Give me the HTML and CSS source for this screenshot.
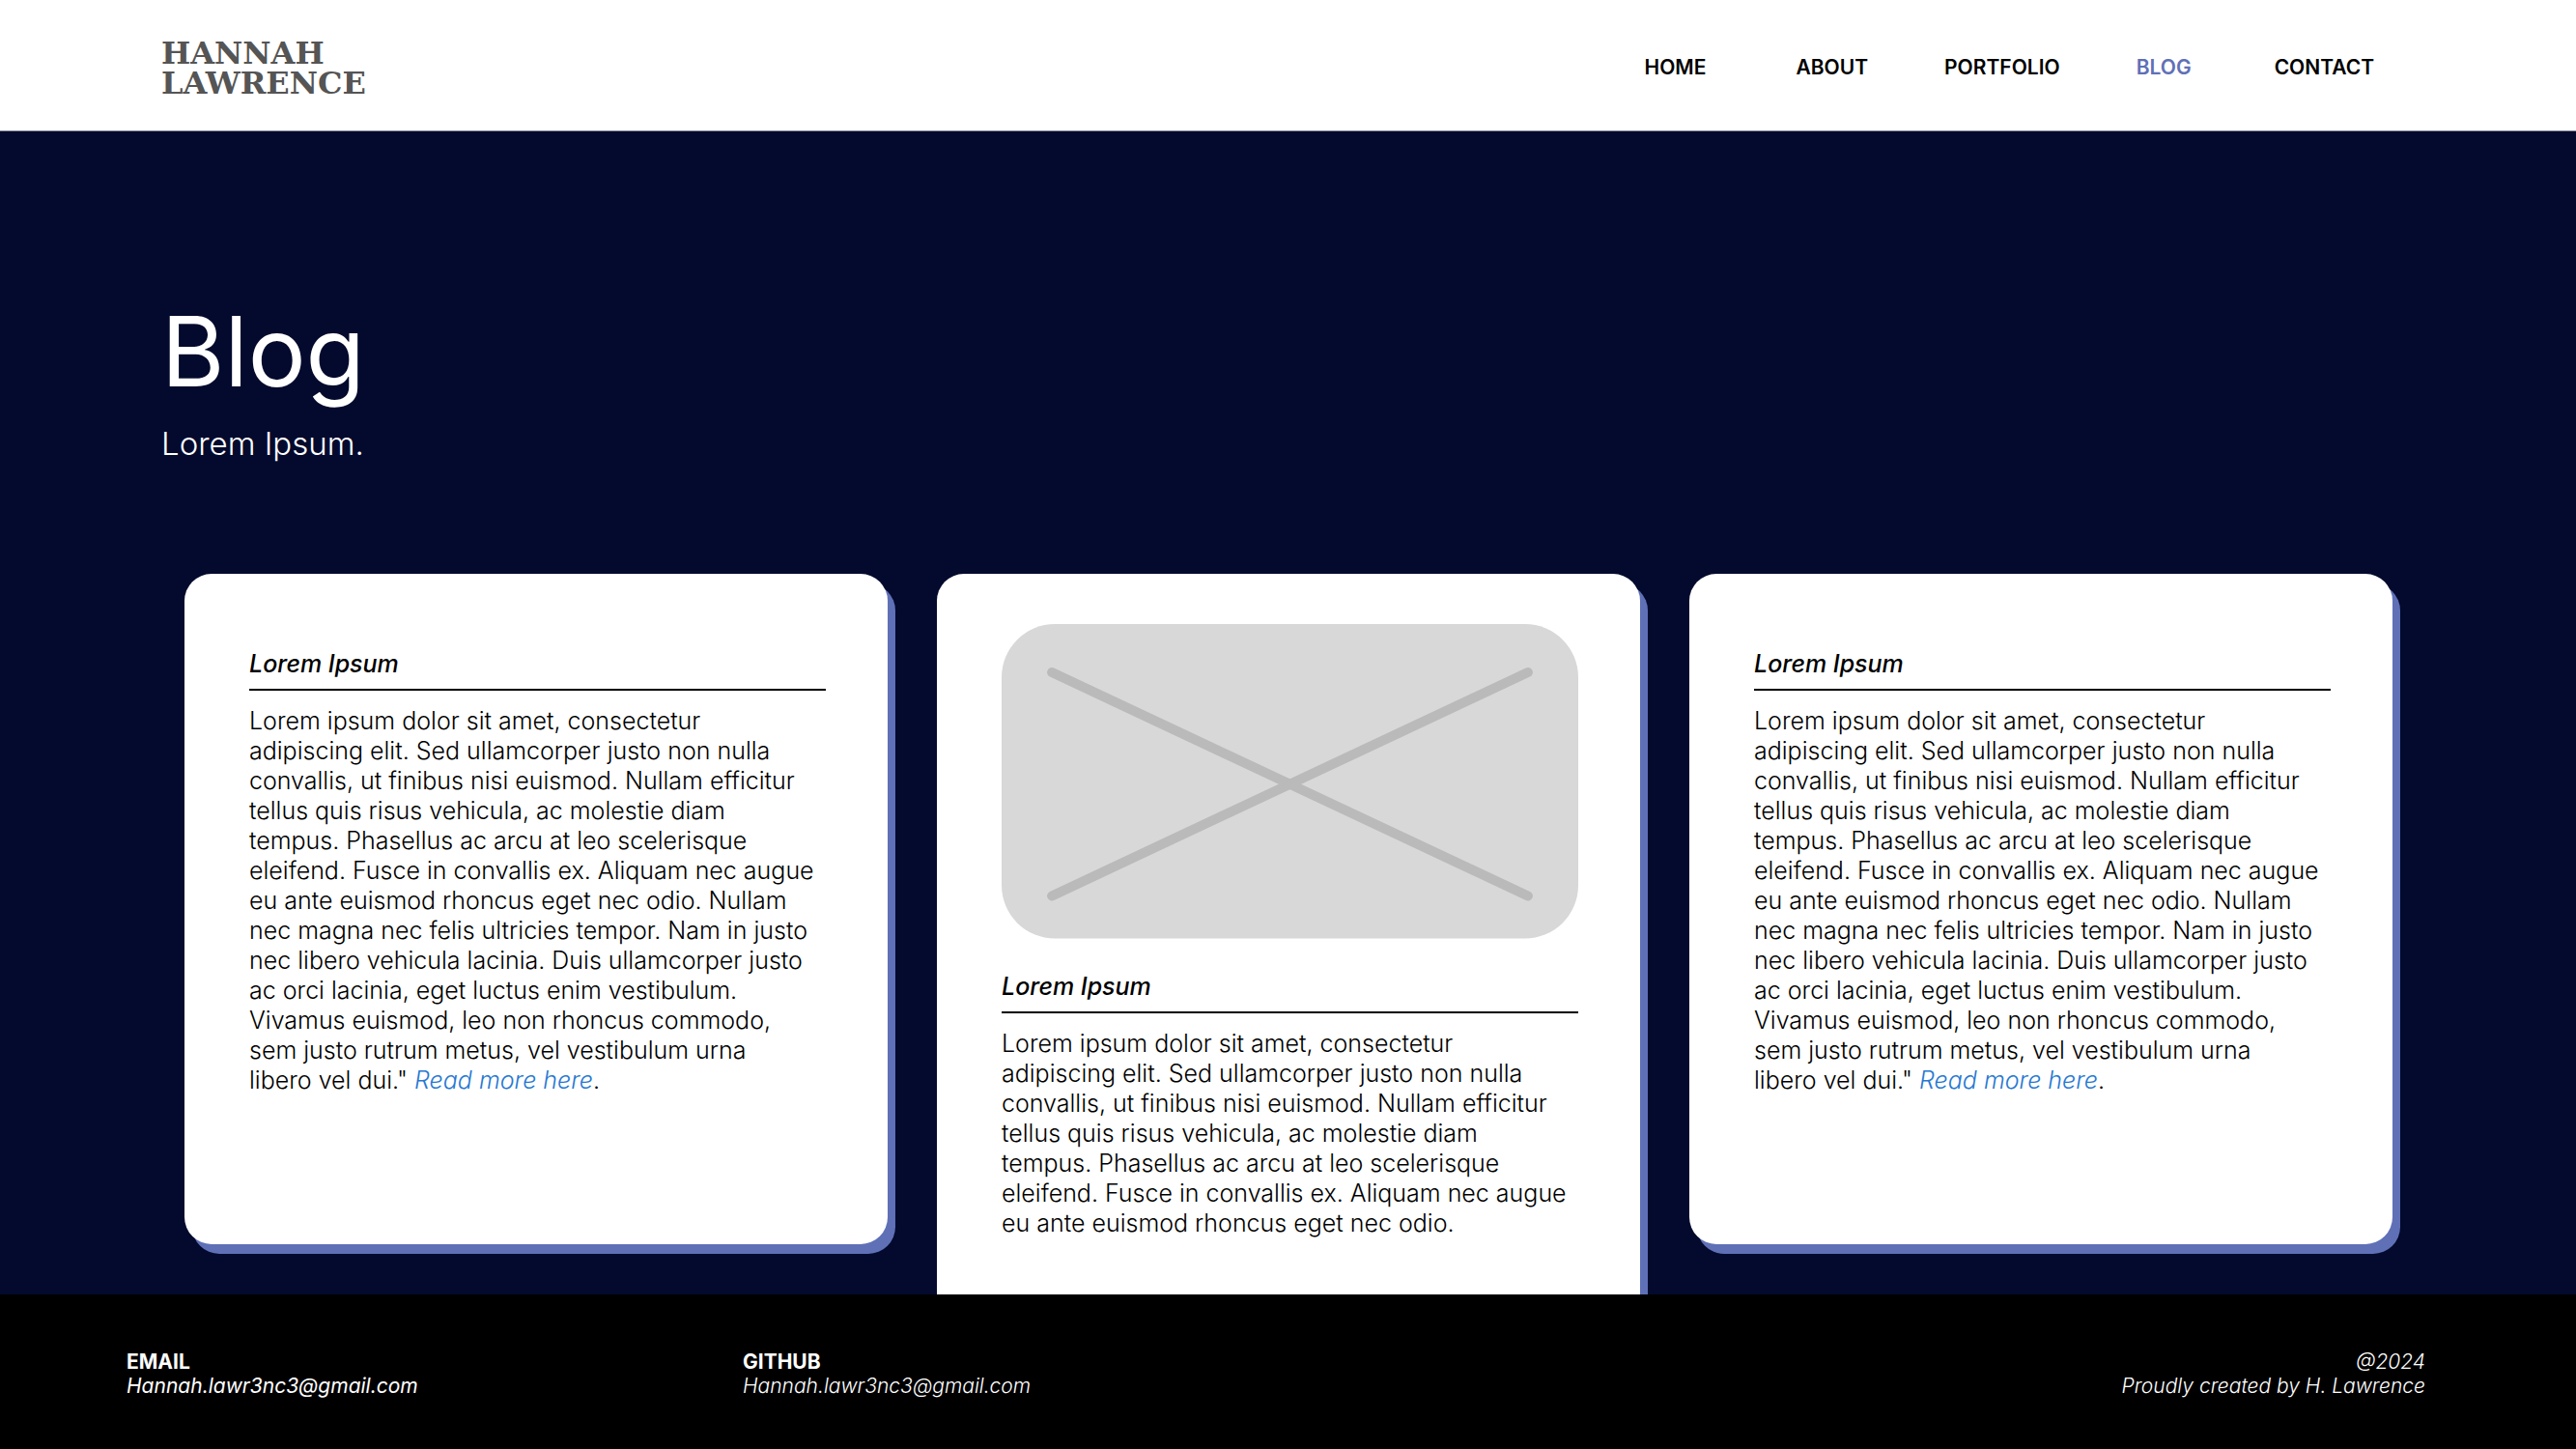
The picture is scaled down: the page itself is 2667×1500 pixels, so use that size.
FILE: index.html
```html
<!DOCTYPE html>
<html lang="en">
<head>
  <meta charset="utf-8">
  <meta name="viewport" content="width=device-width, initial-scale=1">
  <title>Blog | Hannah Lawrence</title>
  <link rel="stylesheet" href="styles.css">
</head>
<body>
  <header class="site-header">
    <a class="logo" href="#">HANNAH<br>LAWRENCE</a>
    <nav class="site-nav">
      <a href="#">HOME</a>
      <a href="#">ABOUT</a>
      <a href="#">PORTFOLIO</a>
      <a class="active" href="#">BLOG</a>
      <a href="#">CONTACT</a>
    </nav>
  </header>

  <main class="blog">
    <div class="intro">
      <h1>Blog</h1>
      <p>Lorem Ipsum.</p>
    </div>
    <div class="cards">
      <article class="card">
        <h2>Lorem Ipsum</h2>
        <p>Lorem ipsum dolor sit amet, consectetur<br>adipiscing elit. Sed ullamcorper justo non nulla<br>convallis, ut finibus nisi euismod. Nullam efficitur<br>tellus quis risus vehicula, ac molestie diam<br>tempus. Phasellus ac arcu at leo scelerisque<br>eleifend. Fusce in convallis ex. Aliquam nec augue<br>eu ante euismod rhoncus eget nec odio. Nullam<br>nec magna nec felis ultricies tempor. Nam in justo<br>nec libero vehicula lacinia. Duis ullamcorper justo<br>ac orci lacinia, eget luctus enim vestibulum.<br>Vivamus euismod, leo non rhoncus commodo,<br>sem justo rutrum metus, vel vestibulum urna<br>libero vel dui." <a href="#">Read more here</a>.</p>
      </article>
      <article class="card card-featured">
        <svg class="placeholder" viewBox="0 0 596 325" role="img" aria-label="Image placeholder">
          <rect width="596" height="325" rx="55" fill="#d8d8d8"/>
          <path d="M52 50 544 281M544 50 52 281" stroke="#bababa" stroke-width="10" stroke-linecap="round"/>
        </svg>
        <h2>Lorem Ipsum</h2>
        <p>Lorem ipsum dolor sit amet, consectetur<br>adipiscing elit. Sed ullamcorper justo non nulla<br>convallis, ut finibus nisi euismod. Nullam efficitur<br>tellus quis risus vehicula, ac molestie diam<br>tempus. Phasellus ac arcu at leo scelerisque<br>eleifend. Fusce in convallis ex. Aliquam nec augue<br>eu ante euismod rhoncus eget nec odio.</p>
      </article>
      <article class="card">
        <h2>Lorem Ipsum</h2>
        <p>Lorem ipsum dolor sit amet, consectetur<br>adipiscing elit. Sed ullamcorper justo non nulla<br>convallis, ut finibus nisi euismod. Nullam efficitur<br>tellus quis risus vehicula, ac molestie diam<br>tempus. Phasellus ac arcu at leo scelerisque<br>eleifend. Fusce in convallis ex. Aliquam nec augue<br>eu ante euismod rhoncus eget nec odio. Nullam<br>nec magna nec felis ultricies tempor. Nam in justo<br>nec libero vehicula lacinia. Duis ullamcorper justo<br>ac orci lacinia, eget luctus enim vestibulum.<br>Vivamus euismod, leo non rhoncus commodo,<br>sem justo rutrum metus, vel vestibulum urna<br>libero vel dui." <a href="#">Read more here</a>.</p>
      </article>
    </div>
  </main>

  <footer class="site-footer">
    <div class="contact">
      <h3>EMAIL</h3>
      <a class="strong" href="#">Hannah.lawr3nc3@gmail.com</a>
    </div>
    <div class="contact">
      <h3>GITHUB</h3>
      <a href="#">Hannah.lawr3nc3@gmail.com</a>
    </div>
    <p class="credit">@2024<br>Proudly created by H. Lawrence</p>
  </footer>
</body>
</html>
```
FILE: styles.css
```css
* {
  box-sizing: border-box;
}

body {
  display: flex;
  flex-direction: column;
  height: 100vh;
  margin: 0;
  background: #030a2d;
  color: #000;
  font-family: Inter, "Liberation Sans", sans-serif;
}

h1,
h2,
h3,
p {
  margin: 0;
}

a {
  color: inherit;
  text-decoration: none;
}

.site-header {
  display: flex;
  align-items: flex-start;
  justify-content: space-between;
  padding: 40px 209px 33px 167px;
  border-bottom: 1px solid #8a8e9c;
  background: #fff;
}

.logo {
  color: #555;
  font-family: "DejaVu Serif", serif;
  font-size: 32px;
  font-weight: 700;
  line-height: 31px;
}

.site-nav {
  display: flex;
  gap: 79px;
  padding-top: 17px;
  font-size: 21px;
  font-weight: 600;
  line-height: 25px;
}

.site-nav a {
  min-width: 64px;
}

.site-nav a:first-child {
  min-width: 78px;
}

.site-nav .active {
  color: #5f70b7;
}

.blog {
  flex: 1;
  min-height: 0;
  overflow: hidden;
}

.intro {
  padding: 168px 167px 0;
  color: #fff;
}

.intro h1 {
  font-size: 100px;
  font-weight: 400;
  line-height: 120px;
}

.intro p {
  margin-top: 15px;
  font-size: 33px;
  font-weight: 300;
  line-height: 40px;
}

.cards {
  display: grid;
  grid-template-columns: repeat(3, 1fr);
  gap: 51px;
  align-items: start;
  padding: 115px 190px 0 191px;
}

.card {
  min-height: 694px;
  padding: 78px 64px 64px 67px;
  border-radius: 28px;
  background: #fff;
  box-shadow: 8px 10px 0 #5f70b7;
  font-size: 25px;
  line-height: 31px;
}

.card-featured {
  min-height: 830px;
  padding-top: 52px;
}

.placeholder {
  display: block;
  width: 100%;
  margin-bottom: 34px;
}

.card h2 {
  padding-bottom: 10px;
  border-bottom: 2px solid #000;
  font-size: 25px;
  font-style: italic;
  font-weight: 500;
}

.card p {
  margin-top: 16px;
  font-weight: 300;
  white-space: nowrap;
}

.card p a {
  color: #2678d2;
  font-style: italic;
}

.site-footer {
  display: grid;
  grid-template-columns: 638px 1fr auto;
  padding: 57px 156px 53px 131px;
  background: #000;
  color: #fff;
  font-size: 21px;
  line-height: 25px;
}

.site-footer h3 {
  font-size: 21px;
  font-weight: 700;
}

.site-footer a {
  font-style: italic;
  font-weight: 300;
}

.site-footer .strong {
  font-weight: 400;
}

.credit {
  font-style: italic;
  font-weight: 300;
  text-align: right;
}
```
